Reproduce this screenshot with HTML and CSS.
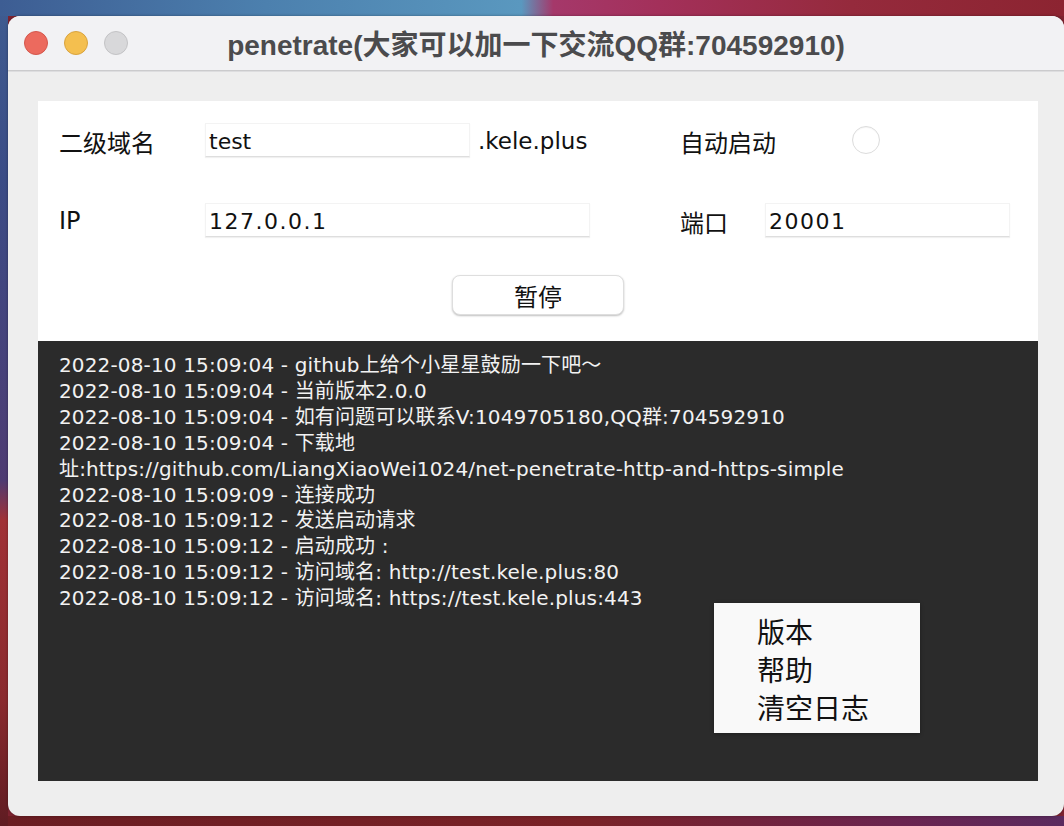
FILE: index.html
```html
<!DOCTYPE html>
<html lang="zh-CN">
<head>
    <meta charset="UTF-8">
    <title>penetrate</title>
    <link rel="stylesheet" href="styles.css">
</head>
<body>
    <div class="window">
        <div class="titlebar">
            <div class="lights">
                <span class="light red"></span>
                <span class="light yellow"></span>
                <span class="light grey"></span>
            </div>
            <div class="title">penetrate(大家可以加一下交流QQ群:704592910)</div>
        </div>

        <div class="content">
            <div class="form">
                <div class="row">
                    <div class="label">二级域名</div>
                    <div class="field short">test</div>
                    <div class="suffix">.kele.plus</div>
                    <div class="label wide">自动启动</div>
                    <span class="radio"></span>
                </div>
                <div class="row">
                    <div class="label">IP</div>
                    <div class="field long num">127.0.0.1</div>
                    <div class="label port">端口</div>
                    <div class="field port-field num">20001</div>
                </div>
                <div class="actions">
                    <button class="btn">暂停</button>
                </div>
            </div>

            <div class="log">
                <div class="line">2022-08-10 15:09:04 - github上给个小星星鼓励一下吧～</div>
                <div class="line">2022-08-10 15:09:04 - 当前版本2.0.0</div>
                <div class="line">2022-08-10 15:09:04 - 如有问题可以联系V:1049705180,QQ群:704592910</div>
                <div class="line">2022-08-10 15:09:04 - 下载地<br>址:https://github.com/LiangXiaoWei1024/net-penetrate-http-and-https-simple</div>
                <div class="line">2022-08-10 15:09:09 - 连接成功</div>
                <div class="line">2022-08-10 15:09:12 - 发送启动请求</div>
                <div class="line">2022-08-10 15:09:12 - 启动成功 :</div>
                <div class="line">2022-08-10 15:09:12 - 访问域名: http://test.kele.plus:80</div>
                <div class="line">2022-08-10 15:09:12 - 访问域名: https://test.kele.plus:443</div>

                <!-- 右键菜单 -->
                <div class="menu">
                    <div class="menu-item">版本</div>
                    <div class="menu-item">帮助</div>
                    <div class="menu-item">清空日志</div>
                </div>
            </div>
        </div>
    </div>
</body>
</html>
```

FILE: styles.css
```css
html, body {
    height: 100%;
}
body {
    margin: 0;
    overflow: hidden;
    font-family: "DejaVu Sans", "Noto Sans CJK SC", sans-serif;
    background-color: #7e2330;
    background-image:
        linear-gradient(to right, #3d5d93 0%, #4c80ae 25%, #5a98bf 49%, #a5386a 52%, #a3305a 62%, #952a3c 80%, #8c2431 100%),
        linear-gradient(to bottom, #3f5c90 0, #3b4c86 180px, #4e3b72 480px, #a03136 520px, #8a2a2e 700px, #5f1c22 826px),
        linear-gradient(to right, #6a1d22 0%, #7a2227 55%, #6a2450 85%, #5a2a5e 100%);
    background-size: 100% 16px, 8px 100%, 100% 10px;
    background-position: top left, top left, bottom left;
    background-repeat: no-repeat;
}
.window {
    margin: 16px 0 0 8px;
    width: 1056px;
    height: 800px;
    background-color: #eeeeee;
    border-radius: 12px;
    overflow: hidden;
    box-shadow: 0 0 3px rgba(0, 0, 0, 0.35);
}
.titlebar {
    height: 54px;
    background-color: #f2f2f4;
    border-bottom: 1px solid #cbcbcd;
    box-shadow: 0 1px 0 #dddddf;
    display: flex;
    align-items: center;
    position: relative;
}
.lights {
    display: flex;
    gap: 16px;
    padding-left: 16px;
}
.light {
    width: 22px;
    height: 22px;
    border-radius: 50%;
    border: 1px solid;
}
.light.red {
    background-color: #ec6a5e;
    border-color: #d4574c;
}
.light.yellow {
    background-color: #f4bf4f;
    border-color: #d9a33e;
}
.light.grey {
    background-color: #d8d8da;
    border-color: #c3c3c5;
}
.title {
    position: absolute;
    left: 0;
    right: 0;
    text-align: center;
    font-family: "Liberation Sans", "Noto Sans CJK SC", sans-serif;
    font-weight: bold;
    font-size: 28px;
    color: #4b4b4d;
    pointer-events: none;
}
.content {
    padding: 30px 0 0 30px;
}
.form {
    width: 1000px;
    height: 240px;
    box-sizing: border-box;
    background-color: #fff;
    padding: 22px 0 0 21px;
}
.row {
    display: flex;
    align-items: center;
    height: 34px;
    margin-bottom: 46px;
}
.label {
    width: 146px;
    font-size: 24px;
    color: #111;
    padding-top: 2px;
}
.label.wide {
    width: 172px;
}
.label.port {
    width: 85px;
    margin-left: 90px;
}
.field {
    height: 34px;
    box-sizing: border-box;
    border: 1px solid #f3f3f3;
    border-bottom-color: #dedede;
    box-shadow: 0 1px 1px rgba(0, 0, 0, 0.06);
    padding: 3px 3px 0;
    font-size: 22px;
    line-height: 30px;
    color: #111;
}
.field.num {
    letter-spacing: 1.5px;
}
.field.short {
    width: 265px;
}
.field.long {
    width: 385px;
}
.field.port-field {
    width: 245px;
}
.suffix {
    width: 202px;
    margin-left: 8px;
    box-sizing: border-box;
    font-size: 23px;
    color: #111;
    padding-top: 2px;
}
.radio {
    width: 28px;
    height: 28px;
    box-sizing: border-box;
    border-radius: 50%;
    border: 1px solid #dcdcdc;
    background-color: #fff;
    box-shadow: inset 0 1px 1px rgba(0, 0, 0, 0.04);
}
.actions {
    margin-top: -8px;
    padding-right: 21px;
    display: flex;
    justify-content: center;
}
.btn {
    width: 172px;
    height: 40px;
    background-color: #fff;
    border: 1px solid #dedede;
    border-radius: 8px;
    box-shadow: 0 1px 2px rgba(0, 0, 0, 0.25);
    font-family: "Noto Sans CJK SC", sans-serif;
    font-size: 24px;
    color: #111;
    padding: 0;
}
.log {
    position: relative;
    width: 1000px;
    height: 440px;
    box-sizing: border-box;
    background-color: #2b2b2b;
    padding: 12px 0 0 21px;
    color: #f2f2f2;
    font-size: 20px;
    line-height: 25.9px;
    letter-spacing: 0.15px;
}
.line {
    white-space: nowrap;
}
.menu {
    position: absolute;
    left: 676px;
    top: 262px;
    width: 206px;
    height: 130px;
    box-sizing: border-box;
    padding: 9px 0 0 43px;
    background-color: #f9f9f9;
    box-shadow: 0 1px 4px rgba(0, 0, 0, 0.3);
    letter-spacing: 0;
}
.menu-item {
    font-family: "Noto Sans CJK SC", sans-serif;
    font-size: 28px;
    line-height: 38px;
    color: #111;
}
```
